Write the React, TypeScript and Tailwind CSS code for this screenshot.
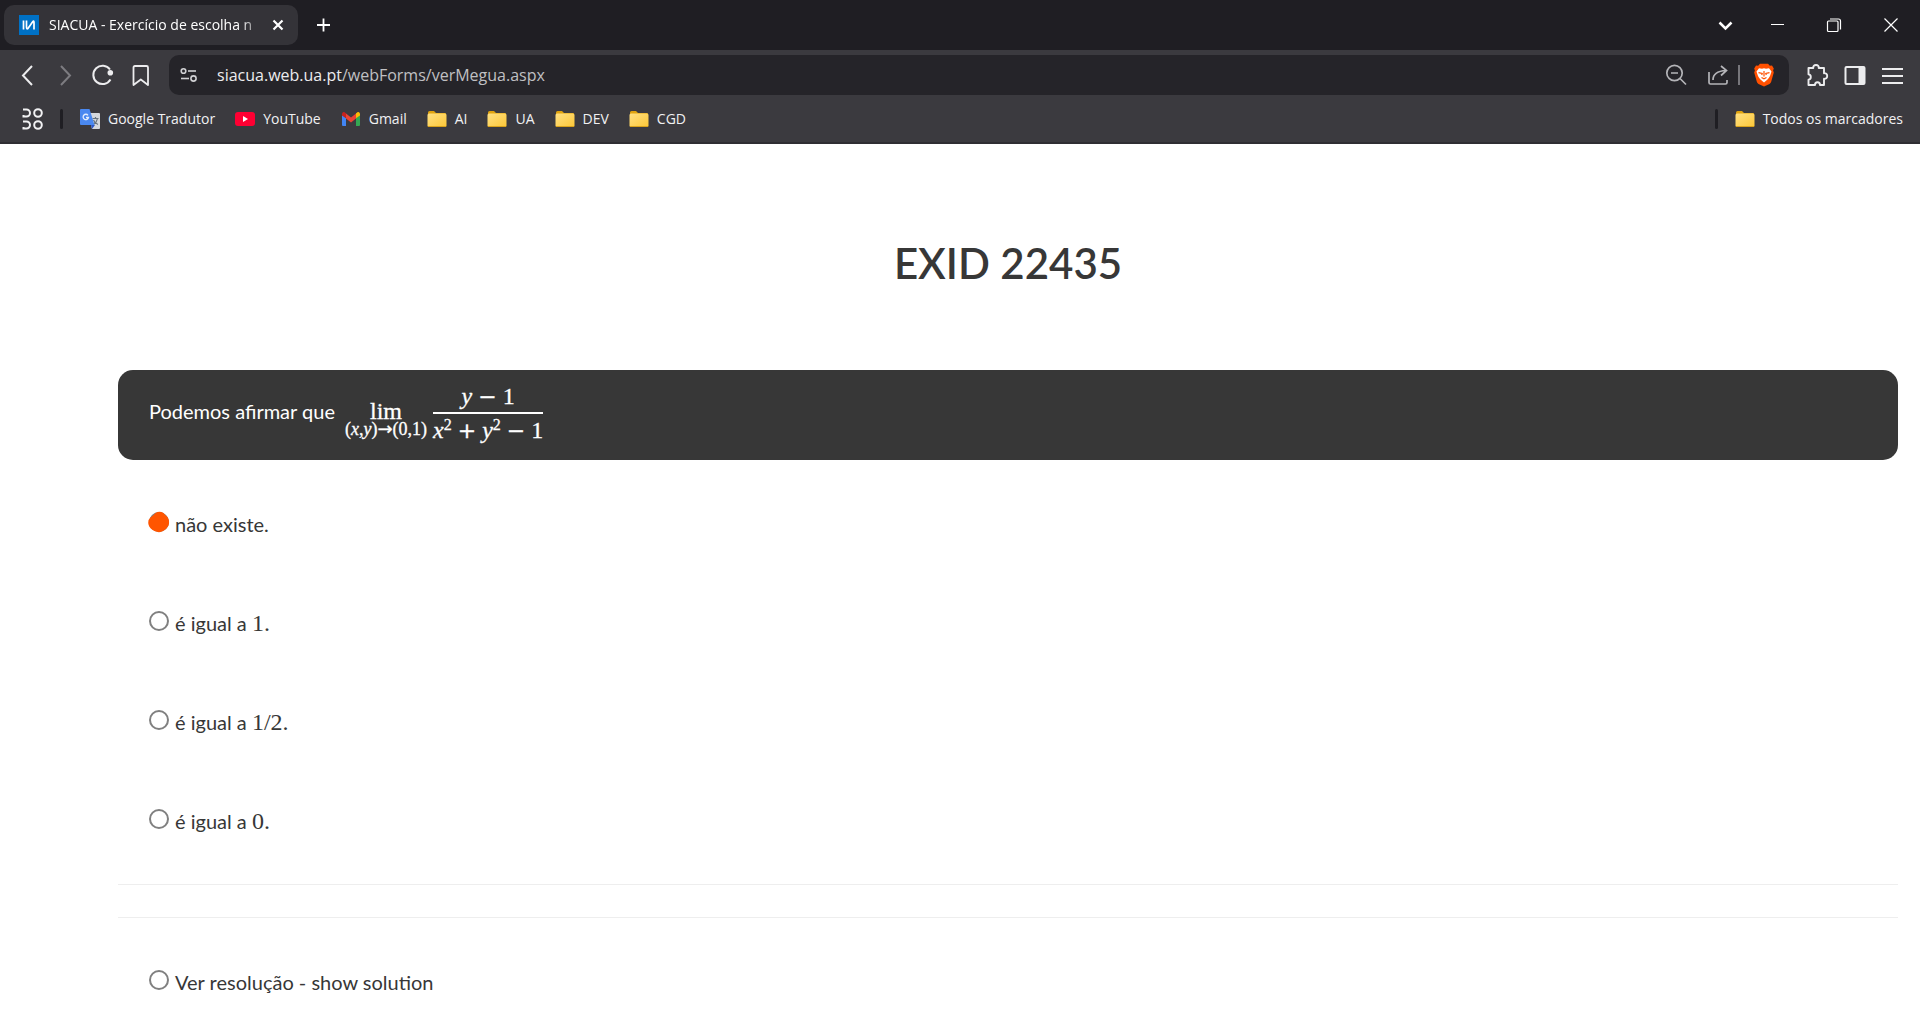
import { useState } from "react";
import type { ReactNode } from "react";

const Folder = () => (
  <svg width="20" height="18" viewBox="0 0 20 18" aria-hidden="true">
    <defs>
      <linearGradient id="folder" x1="0" y1="0" x2="1" y2="1">
        <stop offset="0" stopColor="#ffe083" />
        <stop offset="1" stopColor="#fcc737" />
      </linearGradient>
    </defs>
    <path d="M1 2.500Q1 1 2.500 1H7l2 2h9q1 0 1 1v4H1z" fill="#e0a30f" />
    <rect x="0.500" y="3.500" width="19" height="13.500" rx="1.500" fill="url(#folder)" />
    <path d="M1 16.500h18" stroke="#d9a21b" strokeWidth="1" />
  </svg>
);

const Translate = () => (
  <svg width="20" height="20" viewBox="0 0 20 20" aria-hidden="true">
    <path d="M8 4h11q1 0 1 1v14q0 1-1 1h-7z" fill="#d5d8dc" />
    <path d="M12.500 9.500h6M15.500 8v1.500M17.500 9.500c-.5 3-2 4.500-4 6M13.500 11c.7 2 2.300 3.700 4.500 4.500" stroke="#68747f" strokeWidth="1.200" fill="none" />
    <path d="M11 16h4l-3 4z" fill="#2c56c4" />
    <path d="M1 0h8.500l5 16H1q-1 0-1-1V1q0-1 1-1z" fill="#4a88f0" />
    <path d="M8 6.300A2.700 2.700 0 1 0 8.500 8.500H6" stroke="#e4edfd" strokeWidth="1.300" fill="none" />
  </svg>
);

const YouTube = () => (
  <svg width="20" height="20" viewBox="0 0 20 20" aria-hidden="true">
    <rect x="0" y="3" width="20" height="14" rx="3" fill="#ff0033" />
    <path d="M8 7v6l5-3z" fill="#fff" />
  </svg>
);

const Gmail = () => (
  <svg width="20" height="20" viewBox="0 0 20 20" aria-hidden="true">
    <path d="M1 6l4 3v8H2q-1 0-1-1z" fill="#4285f4" />
    <path d="M15 9l4-3v10q0 1-1 1h-3z" fill="#34a853" />
    <path d="M5 4.500l5 4 5-4v5l-5 4-5-4z" fill="#ea4335" />
    <path d="M1 5q0-1.700 1.500-2 1-.2 2 .9l.5.400v5L1 6.500z" fill="#c5221f" />
    <path d="M19 5q0-1.700-1.500-2-1-.2-2 .9l-.5.400v5l4-2.800z" fill="#fbbc04" />
  </svg>
);

const Brave = () => (
  <svg width="24" height="24" viewBox="0 0 24 24" aria-hidden="true">
    <path d="M8 .8h8l1.800 2 2.200-.3 1.800 3-.7 2 .7 2-2.700 9.500q-.4 1.200-1.600 2L12 23.500 6.500 21q-1.200-.8-1.600-2L2.200 9.500l.7-2-.7-2 1.800-3 2.200.3z" fill="#ff5000" />
    <path d="M7 5.200l3 .5 2-.5 2 .5 3-.5 2.500 3.300-1.500 4.500-1.200 2-1.300 1.500-3.500 3-3.500-3L7.200 15 6 13 4.500 8.500z" fill="#fff" />
    <path d="M6.500 9.700l3.700.7-.5 1.600M17.500 9.700l-3.700.7.500 1.600M12 8v5.500M9.500 14.500l2.500 1.300 2.500-1.300" stroke="#ff5000" strokeWidth="1.200" fill="none" />
  </svg>
);

type Mark = { label: string; icon: ReactNode };

const marks: Mark[] = [
  { label: "Google Tradutor", icon: <Translate /> },
  { label: "YouTube", icon: <YouTube /> },
  { label: "Gmail", icon: <Gmail /> },
  { label: "AI", icon: <Folder /> },
  { label: "UA", icon: <Folder /> },
  { label: "DEV", icon: <Folder /> },
  { label: "CGD", icon: <Folder /> },
];

const Bookmark = ({ label, icon }: Mark) => (
  <a href="#" className="flex items-center gap-2 whitespace-nowrap">
    {icon}
    <span>{label}</span>
  </a>
);

function IconButton({ label, children }: { label: string; children: ReactNode }) {
  return (
    <button type="button" aria-label={label} className="flex size-6 shrink-0 items-center justify-center">
      {children}
    </button>
  );
}

const line = { width: 24, height: 24, viewBox: "0 0 24 24", fill: "none", stroke: "currentColor", strokeWidth: 1.7 };

function TabStrip() {
  return (
    <div className="flex h-[50px] items-center bg-[#1f1e23] pr-[17px] pl-1 text-white">
      <div className="flex h-10 w-[294px] items-center rounded-[10px] bg-[#343338] pr-2 pl-[15px]">
        <svg width="20" height="20" viewBox="0 0 20 20" className="shrink-0" aria-hidden="true">
          <rect width="20" height="20" fill="#0071c5" />
          <path d="M4.500 5.500v9M7.500 5.500v6.500q0 2.500 1.500 1.500l4.500-6.500q1.500-2 1.500.5v7" stroke="#fff" strokeWidth="1.700" fill="none" />
        </svg>
        <span className="ml-2.5 flex-1 whitespace-nowrap [mask-image:linear-gradient(to_right,black_88%,transparent)]">
          SIACUA - Exercício de escolha n
        </span>
        <IconButton label="Fechar separador">
          <svg {...line} strokeWidth="2.200"><path d="M7.500 7.500l9 9M16.500 7.500l-9 9" /></svg>
        </IconButton>
      </div>
      <div className="ml-[14px] flex flex-1">
        <IconButton label="Novo separador">
          <svg {...line} strokeWidth="1.800"><path d="M11.500 5.500v13M5 12h13" /></svg>
        </IconButton>
      </div>
      <div className="flex gap-[33px]">
        <div className="-mr-1">
          <IconButton label="Pesquisar separadores">
            <svg {...line} strokeWidth="2.500"><path d="M7.500 9.500l6 6 6-6" /></svg>
          </IconButton>
        </div>
        <IconButton label="Minimizar">
          <svg {...line} strokeWidth="1"><path d="M6 11.500h13" /></svg>
        </IconButton>
        <IconButton label="Restaurar">
          <svg {...line} strokeWidth="1.200">
            <rect x="5.500" y="8" width="10.500" height="10.500" rx="1" />
            <path d="M8 6h8.500q2 0 2 2v8.500" />
          </svg>
        </IconButton>
        <IconButton label="Fechar">
          <svg {...line} strokeWidth="1.200"><path d="M5.500 5.500l13 13M18.500 5.500l-13 13" /></svg>
        </IconButton>
      </div>
    </div>
  );
}

function Toolbar() {
  return (
    <div className="flex h-[50px] items-center pr-[15px] pl-4 text-[#ececee]">
      <div className="flex gap-[14px]">
        <IconButton label="Retroceder">
          <svg {...line} strokeWidth="2"><path d="M16 3L7 12.500 16 22" /></svg>
        </IconButton>
        <IconButton label="Avançar">
          <svg {...line} strokeWidth="2" stroke="#7d7c81"><path d="M7 3l9 9.500L7 22" /></svg>
        </IconButton>
        <IconButton label="Recarregar">
          <svg {...line} strokeWidth="2">
            <path d="M18 6.500A9.200 9.200 0 1 0 18.500 16.500" />
            <circle cx="18.300" cy="9.800" r="2.800" fill="currentColor" stroke="none" />
          </svg>
        </IconButton>
        <IconButton label="Adicionar marcador">
          <svg {...line} strokeWidth="1.800"><path d="M3.500 4.500Q3.500 3 5 3h11.500Q18 3 18 4.500V22l-7.200-5.500L3.500 22z" strokeLinejoin="round" /></svg>
        </IconButton>
      </div>
      <div className="ml-[15px] flex h-10 flex-1 items-center rounded-[10px] bg-[#252429] pr-[13px] pl-2">
        <IconButton label="Informações do site">
          <svg {...line} strokeWidth="1.600" stroke="#d0d0d3">
            <circle cx="6.500" cy="8" r="2.300" /><path d="M11 8h8" />
            <circle cx="16.500" cy="15.500" r="2.600" /><path d="M4 15.500h8" />
          </svg>
        </IconButton>
        <div className="relative ml-4 flex-1 text-base text-[#c0c0c3]">
          <span aria-hidden="true">
            <span className="text-[#ececee]">siacua.web.ua.pt</span>/webForms/verMegua.aspx
          </span>
          <input
            aria-label="Endereço"
            className="absolute inset-0 bg-transparent text-transparent outline-none"
            defaultValue="siacua.web.ua.pt/webForms/verMegua.aspx"
          />
        </div>
        <div className="flex items-center text-[#b4b4b8]">
          <IconButton label="Reduzir">
            <svg {...line}><circle cx="10.500" cy="10" r="7.700" /><path d="M16 15.500l6 6M7 10h7" /></svg>
          </IconButton>
          <div className="ml-[18px]">
            <IconButton label="Partilhar">
              <svg {...line}><path d="M3 9v10.500Q3 21 4.500 21h15q1.500 0 1.500-1.500V17M7 17c0-6 4-9 13-9.500M15 3l5.500 4.500L15 12.500" /></svg>
            </IconButton>
          </div>
          <span className="mr-3 ml-2 h-5 w-0.5 bg-[#77767b]" />
          <IconButton label="Brave Shields">
            <Brave />
          </IconButton>
        </div>
      </div>
      <div className="ml-4 flex gap-[14px]">
        <IconButton label="Extensões">
          <svg {...line} strokeWidth="1.900" strokeLinejoin="round">
            <path d="M3.500 5h4.800c-.3-1.500.7-3 2.700-3s3 1.500 2.700 3h5.300v5.200c1.800-.2 3.200.8 3.200 2.800s-1.400 3-3.200 2.800V22h-4c0-1.600-.9-2.700-2.500-2.700S10 20.400 10 22H3.500v-5.200c1.500-.2 2.300-1.300 2.300-2.800s-.8-2.600-2.300-2.800z" />
          </svg>
        </IconButton>
        <IconButton label="Barra lateral">
          <svg {...line} strokeWidth="2"><rect x="2.500" y="4" width="19" height="17" rx="1" /><path d="M15.500 4h6v17h-6z" fill="currentColor" stroke="none" /></svg>
        </IconButton>
        <IconButton label="Menu">
          <svg {...line} strokeWidth="2"><path d="M1 6h21M1 13h21M1 20h21" /></svg>
        </IconButton>
      </div>
    </div>
  );
}

function Bookmarks() {
  return (
    <nav aria-label="Marcadores" className="flex h-[42px] items-center pr-[17px] pb-1 pl-5 text-[#f1f1f3]">
      <IconButton label="Aplicações">
        <svg {...line} strokeWidth="2">
          <path d="M3 2.500h3.500a3.500 3.500 0 1 1 0 7h-3V8" />
          <circle cx="18" cy="6" r="3.800" />
          <path d="M3 14.500h3.500a3.500 3.500 0 1 1 0 7h-3V20" />
          <circle cx="18" cy="18" r="3.800" />
        </svg>
      </IconButton>
      <span className="mr-[17px] ml-4 h-5 w-[3px] rounded bg-[#1f1e23]" />
      <div className="flex flex-1 gap-5">
        {marks.map((m) => (
          <Bookmark key={m.label} {...m} />
        ))}
      </div>
      <span className="mr-[17px] h-5 w-[3px] rounded bg-[#1f1e23]" />
      <Bookmark label="Todos os marcadores" icon={<Folder />} />
    </nav>
  );
}

const Op = ({ children }: { children: ReactNode }) => (
  <span className="mx-1.5 font-['DejaVu_Sans',sans-serif] text-[22px] leading-none">{children}</span>
);

const Square = () => <sup className="text-base leading-none">2</sup>;

function Limit() {
  return (
    <span className="flex items-center gap-1.5 font-['Liberation_Serif',serif] text-2xl [-webkit-text-stroke:0.3px_white]">
      <span className="flex flex-col items-center pt-2">
        <span className="leading-5">lim</span>
        <span className="text-lg leading-4 whitespace-nowrap">
          (<i>x</i>,<i>y</i>)<span className="font-['DejaVu_Sans',sans-serif]">→</span>(0,1)
        </span>
      </span>
      <span className="flex flex-col items-center pb-1">
        <span className="leading-8 whitespace-nowrap">
          <i>y</i><Op>−</Op>1
        </span>
        <span className="h-0.5 w-full bg-white" />
        <span className="leading-8 whitespace-nowrap">
          <i>x</i><Square /><Op>+</Op><i>y</i><Square /><Op>−</Op>1
        </span>
      </span>
    </span>
  );
}

const Num = ({ children }: { children: ReactNode }) => (
  <span className="font-['Liberation_Serif',serif] text-2xl leading-none">{children}</span>
);

function Option({ id, checked, onPick, children }: { id: string; checked: boolean; onPick: () => void; children: ReactNode }) {
  return (
    <div className="flex h-[99px] items-center gap-1.5 pl-[31px]">
      <span className="relative mb-1 size-5">
        <input
          id={id}
          type="radio"
          name="answer"
          checked={checked}
          onChange={onPick}
          className="block size-5 appearance-none rounded-full border-2 border-[#808080] bg-white"
        />
        {checked && (
          <svg width="22" height="22" viewBox="0 0 22 22" className="pointer-events-none absolute -top-px -left-px" aria-hidden="true">
            <path d="M7.500 2Q11.500-.5 15.500 2 17 4 19.500 6 22 10 20.500 14.500 18 19 14 20.500 10.500 22 6.500 20 1.500 17.500.5 13.500-.5 9 2.500 6.500 5.500 4.500 7.500 2z" fill="#ff5500" />
          </svg>
        )}
      </span>
      <label htmlFor={id} className="leading-8">{children}</label>
    </div>
  );
}

export default function App() {
  const [picked, setPicked] = useState("a");
  const option = (id: string, content: ReactNode) => (
    <Option id={id} checked={picked === id} onPick={() => setPicked(id)}>{content}</Option>
  );
  return (
    <div className="min-h-screen overflow-hidden bg-white">
      <header className="border-b-2 border-[#2f2e33] bg-[#3b3a3f] font-['Open_Sans','Noto_Sans',sans-serif] text-sm">
        <TabStrip />
        <Toolbar />
        <Bookmarks />
      </header>
      <main className="pr-[22px] pl-[118px] font-[Lato,sans-serif] text-xl text-[#373737]">
        <h1 className="pt-[92px] pb-[80px] text-center text-[42px] leading-[54px] font-semibold">EXID 22435</h1>
        <section className="flex h-[90px] items-center gap-2.5 rounded-[15px] bg-[#373737] pl-[31px] text-white">
          <span className="pb-2">Podemos afirmar que</span>
          <Limit />
        </section>
        <form className="pt-[14px]">
          {option("a", "não existe.")}
          {option("b", <>é igual a <Num>1.</Num></>)}
          {option("c", <>é igual a <Num>1/2.</Num></>)}
          {option("d", <>é igual a <Num>0.</Num></>)}
          <hr className="mt-[14px] border-[#eeeeee]" />
          <hr className="mt-8 mb-[14px] border-[#eeeeee]" />
          {option("e", "Ver resolução - show solution")}
        </form>
      </main>
    </div>
  );
}
